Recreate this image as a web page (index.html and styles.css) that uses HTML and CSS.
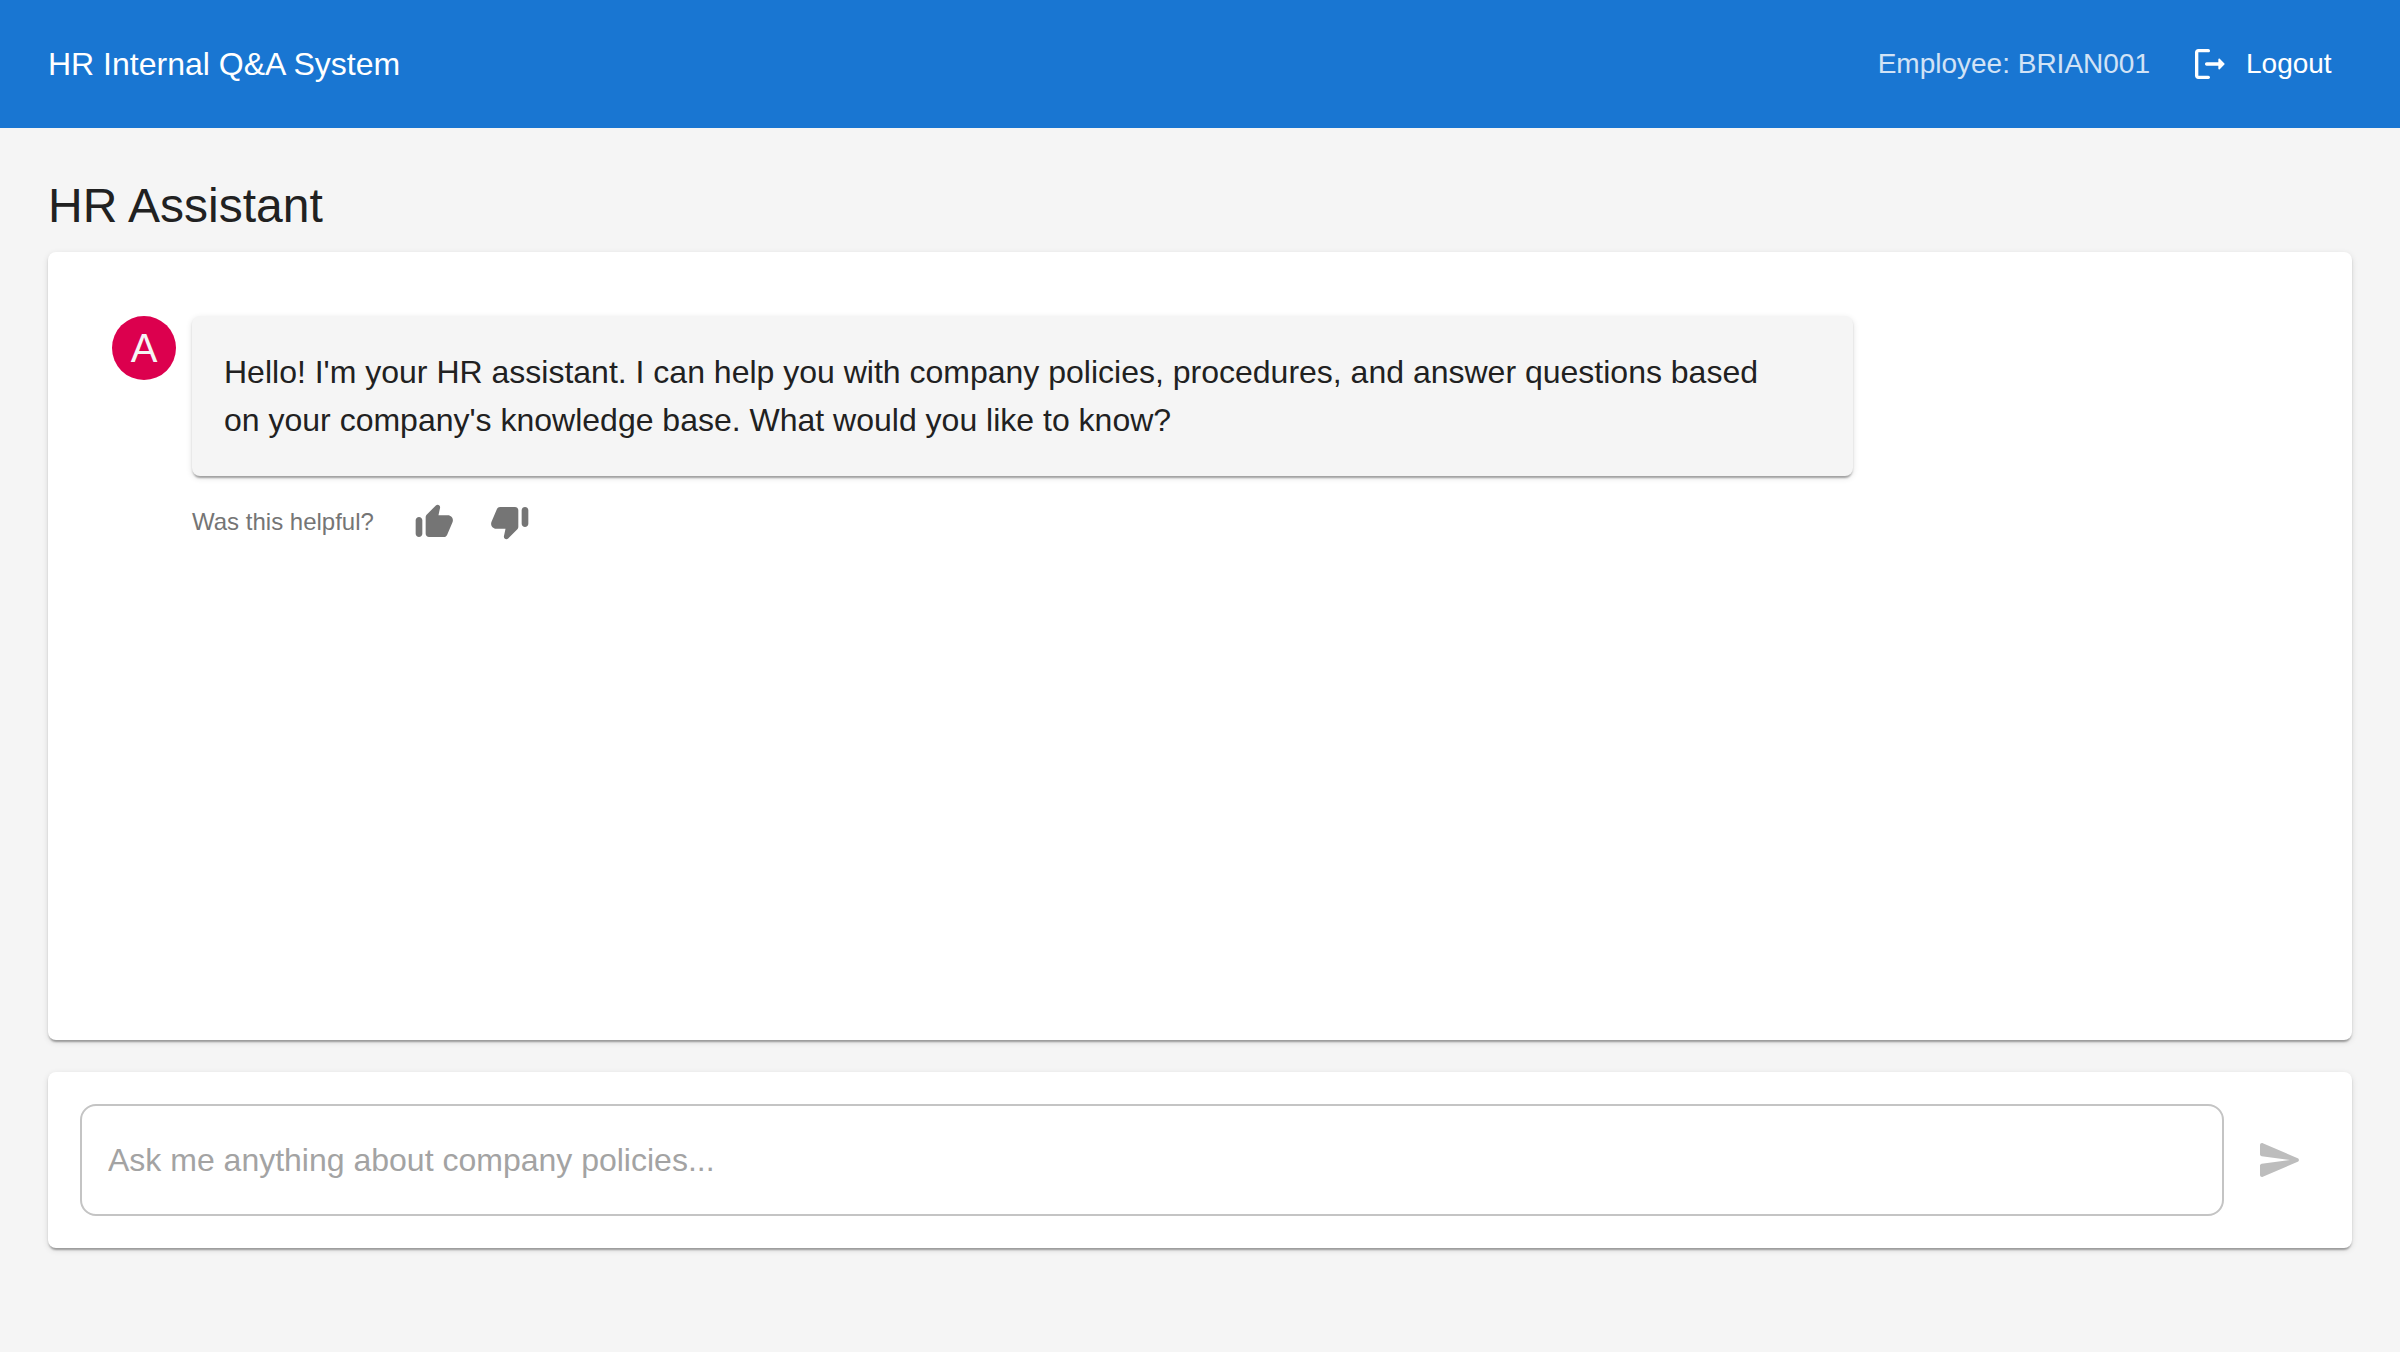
FILE: index.html
```html
<!DOCTYPE html>
<html lang="en">
<head>
  <meta charset="utf-8">
  <meta name="viewport" content="width=device-width, initial-scale=1">
  <title>HR Internal Q&amp;A System</title>
  <link rel="stylesheet" href="styles.css">
</head>
<body>
  <div class="app">
    <header class="app-bar">
      <div class="app-bar__title">HR Internal Q&amp;A System</div>
      <div class="app-bar__user">Employee: BRIAN001</div>
      <button class="logout" type="button">
        <svg class="icon icon--small" viewBox="0 0 24 24" aria-hidden="true"><path d="M5 5h6c.55 0 1-.45 1-1s-.45-1-1-1H5c-1.1 0-2 .9-2 2v14c0 1.1.9 2 2 2h6c.55 0 1-.45 1-1s-.45-1-1-1H5V5z"/><path d="M20.65 11.65l-2.79-2.79c-.32-.32-.86-.1-.86.35V11h-7c-.55 0-1 .45-1 1s.45 1 1 1h7v1.79c0 .45.54.67.85.35l2.79-2.79c.2-.19.2-.51.01-.7z"/></svg>
        Logout
      </button>
    </header>

    <main class="page">
      <h1 class="page__title">HR Assistant</h1>

      <section class="card chat" aria-label="Conversation">
        <article class="message">
          <div class="avatar">A</div>
          <div class="message__body">
            <p class="bubble">Hello! I'm your HR assistant. I can help you with company policies, procedures, and answer questions based<br> on your company's knowledge base. What would you like to know?</p>
            <div class="feedback">
              <span class="feedback__label">Was this helpful?</span>
              <button class="icon-button icon-button--small" type="button" aria-label="Helpful">
                <svg class="icon icon--small" viewBox="0 0 24 24" aria-hidden="true"><path d="M13.12 2.06 7.58 7.6c-.37.37-.58.88-.58 1.41V19c0 1.1.9 2 2 2h9c.8 0 1.52-.48 1.84-1.21l3.26-7.61C23.94 10.2 22.49 8 20.34 8h-5.65l.95-4.58c.1-.5-.05-1.01-.41-1.37-.59-.58-1.53-.58-2.11.01zM3 21c1.1 0 2-.9 2-2v-8c0-1.1-.9-2-2-2s-2 .9-2 2v8c0 1.1.9 2 2 2z"/></svg>
              </button>
              <button class="icon-button icon-button--small" type="button" aria-label="Not helpful">
                <svg class="icon icon--small" viewBox="0 0 24 24" aria-hidden="true"><path d="M10.88 21.94l5.53-5.54c.37-.37.58-.88.58-1.41V5c0-1.1-.9-2-2-2H6c-.8 0-1.52.48-1.83 1.21L.91 11.82C.06 13.8 1.51 16 3.66 16h5.65l-.95 4.58c-.1.5.05 1.01.41 1.37.59.58 1.53.58 2.11-.01zM21 3c-1.1 0-2 .9-2 2v8c0 1.1.9 2 2 2s2-.9 2-2V5c0-1.1-.9-2-2-2z"/></svg>
              </button>
            </div>
          </div>
        </article>
      </section>

      <form class="card composer">
        <input class="composer__input" type="text" aria-label="Your question" placeholder="Ask me anything about company policies...">
        <button class="icon-button" type="submit" aria-label="Send" disabled>
          <svg class="icon" viewBox="0 0 24 24" aria-hidden="true"><path d="M3.4 20.4l17.45-7.48c.81-.35.81-1.49 0-1.84L3.4 3.6c-.66-.29-1.39.2-1.39.91L2 9.12c0 .5.37.93.87.99L17 12 2.87 13.88c-.5.07-.87.5-.87 1l.01 4.61c0 .71.73 1.2 1.39.91z"/></svg>
        </button>
      </form>
    </main>
  </div>
</body>
</html>
```
FILE: styles.css
```css
*,
*::before,
*::after {
  box-sizing: border-box;
}

body {
  margin: 0;
  background: #f5f5f5;
  color: #212121;
  font-family: "Liberation Sans", Arial, Helvetica, sans-serif;
  font-size: 32px;
  line-height: 48px;
}

button,
input {
  font: inherit;
}

button {
  border: 0;
  background: none;
  cursor: pointer;
}

.app {
  display: flex;
  flex-direction: column;
  min-height: 100vh;
}

/* Top bar */
.app-bar {
  display: flex;
  align-items: center;
  min-height: 128px;
  padding: 0 48px;
  background: #1976d2;
  color: #fff;
}

.app-bar__title {
  flex: 1;
}

.app-bar__user {
  margin-right: 32px;
  font-size: 28px;
  opacity: 0.8;
}

.logout {
  display: flex;
  align-items: center;
  gap: 16px;
  min-width: 170px;
  padding: 12px 16px 12px 8px;
  color: inherit;
  font-size: 28px;
}

/* Icons */
.icon {
  display: block;
  width: 48px;
  height: 48px;
  fill: currentColor;
}

.icon--small {
  width: 40px;
  height: 40px;
}

.icon-button {
  padding: 16px;
  border-radius: 50%;
  color: #757575;
}

.icon-button--small {
  padding: 10px;
}

.icon-button:disabled {
  color: #bdbdbd;
  cursor: default;
}

/* Page */
.page {
  display: flex;
  flex: 1;
  flex-direction: column;
  padding: 46px 48px 104px;
}

.page__title {
  margin: 0 0 14px;
  font-size: 48px;
  font-weight: 400;
  line-height: 64px;
}

.card,
.bubble {
  border-radius: 8px;
  box-shadow:
    0 4px 2px -2px rgba(0, 0, 0, 0.2),
    0 2px 2px 0 rgba(0, 0, 0, 0.14),
    0 2px 6px 0 rgba(0, 0, 0, 0.12);
}

.card {
  background: #fff;
}

/* Conversation */
.chat {
  flex: 1;
  padding: 64px;
}

.message {
  display: flex;
  gap: 16px;
  max-width: 80%;
}

.avatar {
  flex: none;
  width: 64px;
  height: 64px;
  border-radius: 50%;
  background: #dc004e;
  color: #f5f5f5;
  font-size: 40px;
  line-height: 64px;
  text-align: center;
}

.message__body {
  flex: 1;
}

.bubble {
  margin: 0;
  padding: 32px;
  background: #f5f5f5;
}

.feedback {
  display: flex;
  align-items: center;
  gap: 16px;
  margin-top: 16px;
}

.feedback__label {
  min-width: 196px;
  color: #757575;
  font-size: 24px;
}

/* Question box */
.composer {
  display: flex;
  align-items: center;
  gap: 16px;
  margin-top: 32px;
  padding: 32px;
}

.composer__input {
  flex: 1;
  min-width: 0;
  height: 112px;
  padding: 0 26px;
  border: 2px solid #c4c4c4;
  border-radius: 16px;
  background: none;
  color: inherit;
}

.composer__input::placeholder {
  color: #a3a3a3;
  opacity: 1;
}
```
